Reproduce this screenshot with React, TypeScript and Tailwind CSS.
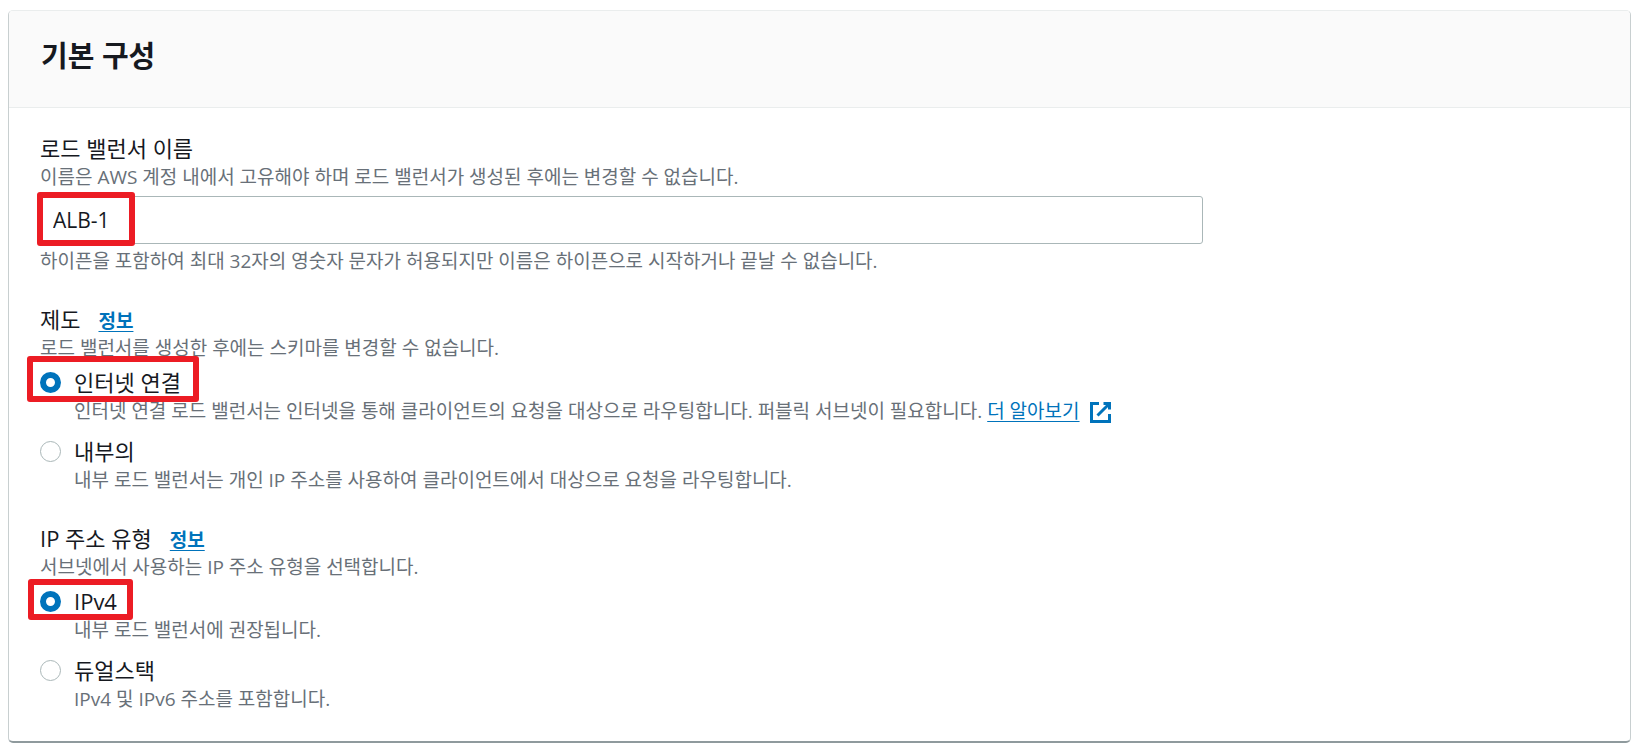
import { useState } from 'react';
import type { ReactNode } from 'react';

interface Option {
    value: string;
    label: string;
    description: ReactNode;
}

interface RadioGroupProps {
    name: string;
    title: string;
    description: string;
    options: Option[];
    defaultValue: string;
    highlightClassName: string;
}

function ExternalIcon() {
    return (
        <svg
            className="ml-2.5 inline-block size-[21px] align-[-5px]"
            viewBox="1 1 14 14"
            fill="none"
            stroke="currentColor"
            strokeWidth="2"
            aria-hidden="true"
        >
            <path d="M10 2h4v4" />
            <path d="M6 10l7.7-7.7" />
            <path d="M14 9v5H2V2h5" />
        </svg>
    );
}

function Highlight({ className }: { className: string }) {
    return (
        <span
            className={`pointer-events-none absolute rounded-[3px] border-6 border-[#ec1c24] ${className}`}
            aria-hidden="true"
        />
    );
}

function RadioGroup({ name, title, description, options, defaultValue, highlightClassName }: RadioGroupProps) {
    const [selected, setSelected] = useState(defaultValue);

    return (
        <fieldset className="mt-[30px]">
            <legend className="text-[22px] leading-7">
                {title}
                <a
                    href="#info"
                    className="ml-[18px] text-[19px] leading-none font-bold text-[#0073bb] underline underline-offset-3"
                >
                    정보
                </a>
            </legend>
            <p className="mt-px text-[19px] leading-7 text-[#687078]">{description}</p>

            <div className="mt-1.5 flex flex-col gap-3">
                {options.map((option) => (
                    <div key={option.value} className="relative">
                        <div className="flex items-center">
                            <input
                                id={`${name}-${option.value}`}
                                type="radio"
                                name={name}
                                value={option.value}
                                checked={selected === option.value}
                                onChange={() => setSelected(option.value)}
                                className="size-[21px] shrink-0 appearance-none rounded-full border border-[#aab7b8] bg-white checked:border-[6px] checked:border-[#0073bb]"
                            />
                            <label htmlFor={`${name}-${option.value}`} className="pl-[13px] text-[22px] leading-7">
                                {option.label}
                            </label>
                        </div>
                        <p className="mt-px pl-[34px] text-[19px] leading-7 text-[#687078]">{option.description}</p>
                        {option.value === defaultValue && <Highlight className={highlightClassName} />}
                    </div>
                ))}
            </div>
        </fieldset>
    );
}

const schemeOptions: Option[] = [
    {
        value: 'internet-facing',
        label: '인터넷 연결',
        description: (
            <>
                인터넷 연결 로드 밸런서는 인터넷을 통해 클라이언트의 요청을 대상으로 라우팅합니다. 퍼블릭 서브넷이 필요합니다.{' '}
                <a href="#learn-more" className="whitespace-nowrap text-[#0073bb]">
                    <span className="underline underline-offset-3">더 알아보기</span>
                    <ExternalIcon />
                </a>
            </>
        ),
    },
    {
        value: 'internal',
        label: '내부의',
        description: '내부 로드 밸런서는 개인 IP 주소를 사용하여 클라이언트에서 대상으로 요청을 라우팅합니다.',
    },
];

const ipOptions: Option[] = [
    { value: 'ipv4', label: 'IPv4', description: '내부 로드 밸런서에 권장됩니다.' },
    { value: 'dualstack', label: '듀얼스택', description: 'IPv4 및 IPv6 주소를 포함합니다.' },
];

export default function App() {
    const [name, setName] = useState('ALB-1');

    return (
        <main className="bg-white pt-2.5 pr-1 pb-2.5 pl-2 font-['Open_Sans','Noto_Sans_CJK_KR',sans-serif] text-[#16191f]">
            <section className="rounded-[5px] border border-t-[#eaeded] border-r-[#c8cfd0] border-b-2 border-b-[#8f9a9d] border-l-[#c8cfd0]">
                <header className="rounded-t border-b border-[#eaeded] bg-[#fafafa] px-8 pt-[27px] pb-[33px]">
                    <h2 className="text-[29px] leading-9 font-bold">기본 구성</h2>
                </header>

                <div className="pt-[26px] pr-10 pb-7 pl-[31px]">
                    <label htmlFor="lb-name" className="block text-[22px] leading-7">
                        로드 밸런서 이름
                    </label>
                    <p className="mt-px text-[19px] leading-7 text-[#687078]">
                        이름은 AWS 계정 내에서 고유해야 하며 로드 밸런서가 생성된 후에는 변경할 수 없습니다.
                    </p>
                    <div className="relative mt-[5px]">
                        <input
                            id="lb-name"
                            type="text"
                            value={name}
                            onChange={(e) => setName(e.target.value)}
                            className="block h-12 w-3/4 rounded-[3px] border border-[#aab7b8] bg-white px-3 text-[21px]"
                        />
                        <Highlight className="-top-1 -left-[3px] h-[54px] w-[98px]" />
                    </div>
                    <p className="mt-[3px] text-[19px] leading-7 text-[#687078]">
                        하이픈을 포함하여 최대 32자의 영숫자 문자가 허용되지만 이름은 하이픈으로 시작하거나 끝날 수 없습니다.
                    </p>

                    <RadioGroup
                        name="scheme"
                        title="제도"
                        description="로드 밸런서를 생성한 후에는 스키마를 변경할 수 없습니다."
                        options={schemeOptions}
                        defaultValue="internet-facing"
                        highlightClassName="-top-3 -left-[13px] h-[46px] w-[172px]"
                    />
                    <RadioGroup
                        name="ip-type"
                        title="IP 주소 유형"
                        description="서브넷에서 사용하는 IP 주소 유형을 선택합니다."
                        options={ipOptions}
                        defaultValue="ipv4"
                        highlightClassName="-top-2 -left-3 h-[41px] w-[105px]"
                    />
                </div>
            </section>
        </main>
    );
}
